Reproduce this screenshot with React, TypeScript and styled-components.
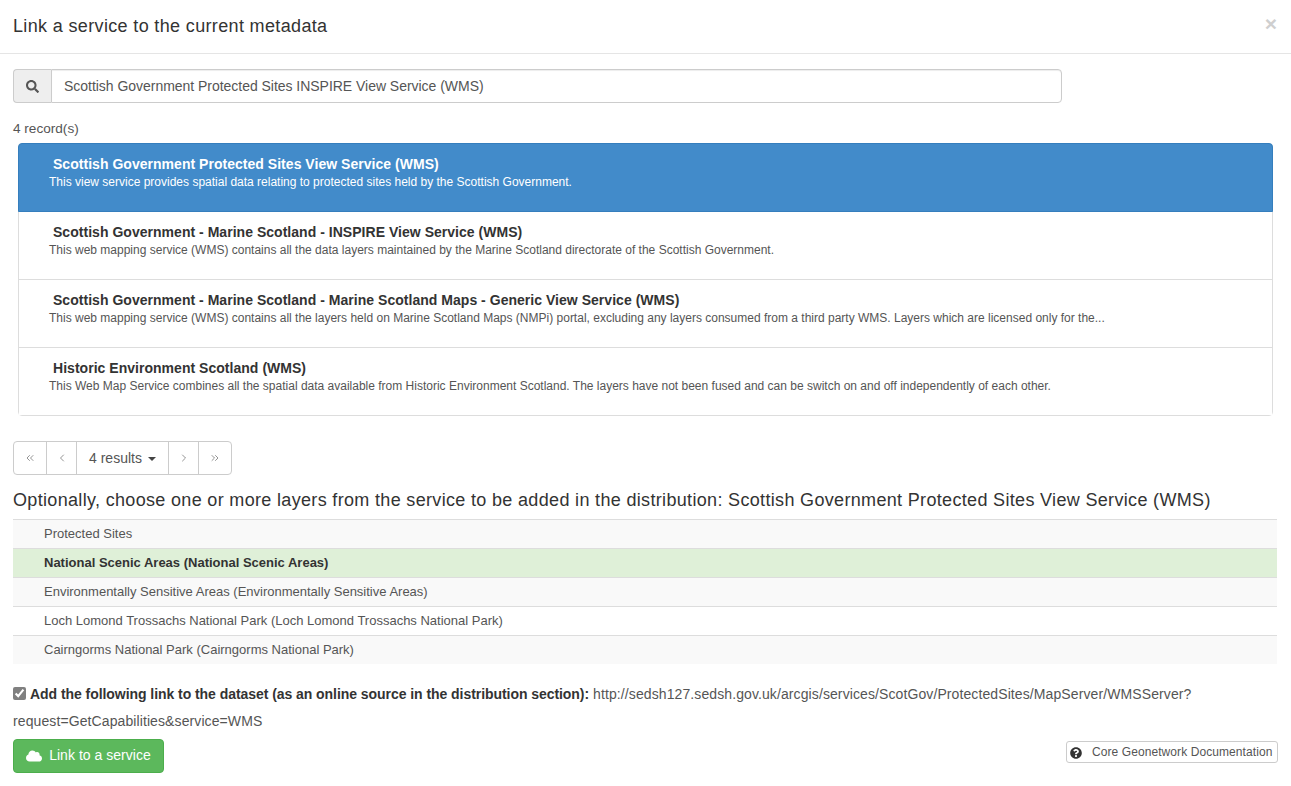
import React from 'react'
import styled, { createGlobalStyle } from 'styled-components'
import { FaSearch, FaCloud, FaQuestionCircle } from 'react-icons/fa'
import { ChevronLeft, ChevronRight, ChevronsLeft, ChevronsRight } from 'lucide-react'

const GlobalStyle = createGlobalStyle`
  html, body {
    margin: 0;
    padding: 0;
    background: #fff;
    color: #333;
    font-family: 'Liberation Sans', Arial, sans-serif;
    font-size: 13px;
    line-height: 1.42857;
  }
  * { box-sizing: border-box; }
`

const Modal = styled.div`
  width: 1291px;
  height: 786px;
  overflow: hidden;
  background: #fff;
`

const ModalHeader = styled.div`
  height: 54px;
  padding: 0 13px;
  display: flex;
  align-items: center;
  justify-content: space-between;
  border-bottom: 1px solid #e5e5e5;
`

const Title = styled.h4`
  margin: 0;
  font-size: 18px;
  font-weight: 400;
  color: #333;
  letter-spacing: 0.35px;
`

const Close = styled.span`
  color: #cfcfcf;
  font-size: 21px;
  font-weight: 700;
  line-height: 1;
  margin-right: 1px;
  margin-top: -7px;
`

const ModalBody = styled.div`
  padding: 15px 13px 0;
`

const SearchGroup = styled.div`
  display: flex;
  width: 1049px;
  height: 34px;
`

const SearchAddon = styled.span`
  width: 38px;
  display: flex;
  align-items: center;
  justify-content: center;
  background: #eee;
  border: 1px solid #ccc;
  border-right: 0;
  border-radius: 4px 0 0 4px;
  color: #555;
  font-size: 13px;
`

const SearchInput = styled.input`
  flex: 1;
  min-width: 0;
  padding: 2px 12px 0;
  border: 1px solid #ccc;
  border-radius: 0 4px 4px 0;
  color: #555;
  font: inherit;
  font-size: 14px;
  letter-spacing: -0.03px;
  box-shadow: inset 0 1px 1px rgba(0, 0, 0, 0.075);
  outline: none;
`

const RecordCount = styled.div`
  margin-top: 16px;
  height: 24px;
  line-height: 19px;
  font-size: 13.6px;
  color: #555;
`

const ResultList = styled.div`
  margin-left: 5px;
  width: 1255px;
  height: 273px;
  border: 1px solid #ddd;
  border-radius: 4px;
`

const ResultItem = styled.div<{ active?: boolean }>`
  height: ${props => (props.active ? '69px' : '68px')};
  margin: ${props => (props.active ? '-1px -1px 0' : '0')};
  padding: 11px 0 0 30px;
  background: ${props => (props.active ? '#428bca' : '#fff')};
  color: ${props => (props.active ? '#fff' : '#333')};
  border: ${props => (props.active ? '1px solid #357ebd' : '0')};
  border-bottom: 1px solid ${props => (props.active ? '#357ebd' : '#ddd')};
  border-radius: ${props => (props.active ? '4px 4px 0 0' : '0')};

  &:last-child {
    height: 67px;
    border-bottom: 0;
  }
`

const ResultTitle = styled.div`
  margin: 0 0 1px 4px;
  font-size: 14px;
  font-weight: 700;
  line-height: 18px;
  letter-spacing: 0.03px;
`

const ResultText = styled.div<{ active?: boolean }>`
  font-size: 12px;
  line-height: 17px;
  color: ${props => (props.active ? '#fff' : '#555')};
`

const Pager = styled.div`
  display: inline-flex;
  margin-top: 25px;
  height: 34px;
  border: 1px solid #ccc;
  border-radius: 4px;
`

const PagerCell = styled.span<{ size?: 'first' | 'last' | 'step' | 'wide' }>`
  width: ${props => (props.size === 'wide' ? '92px' : props.size === 'step' ? '30px' : props.size === 'last' ? '33px' : '32px')};
  padding-top: ${props => (props.size === 'wide' ? '1px' : '0')};
  display: flex;
  align-items: center;
  justify-content: center;
  gap: 6px;
  font-size: 14px;
  color: ${props => (props.size === 'wide' ? '#555' : '#666')};
  & + & { border-left: 1px solid #ccc; }
`

const Caret = styled.span`
  width: 0;
  height: 0;
  border-top: 4px solid #444;
  border-left: 4px solid transparent;
  border-right: 4px solid transparent;
`

const LayersHeading = styled.h3`
  margin: 15px 0 9px;
  font-size: 18px;
  font-weight: 400;
  line-height: 20px;
  color: #333;
  letter-spacing: 0.33px;
`

const LayerTable = styled.div`
  width: 1264px;
  border-top: 1px solid #ddd;
`

const LayerRow = styled.div<{ selected?: boolean; striped?: boolean }>`
  height: 29px;
  padding-left: 31px;
  display: flex;
  align-items: center;
  font-size: 13px;
  color: ${props => (props.selected ? '#333' : '#555')};
  font-weight: ${props => (props.selected ? 700 : 400)};
  background: ${props => (props.selected ? '#dff0d8' : props.striped ? '#f9f9f9' : '#fff')};
  &:first-child { height: 28px; }
  & + & { border-top: 1px solid #ddd; }
`

const LinkLine = styled.div`
  margin-top: 17px;
  width: 1264px;
  line-height: 27px;
  font-size: 14px;
  letter-spacing: 0.1px;
  color: #555;
`

const LinkCheck = styled.input`
  margin: 0 4px 0 0;
  width: 13px;
  height: 13px;
  vertical-align: -1px;
  accent-color: #808080;
`

const LinkLabel = styled.strong`
  color: #333;
  font-weight: 700;
  letter-spacing: -0.055px;
`

const Footer = styled.div`
  margin-top: 4px;
  width: 1265px;
  display: flex;
  justify-content: space-between;
  align-items: flex-start;
`

const LinkButton = styled.button`
  height: 34px;
  width: 151px;
  display: flex;
  align-items: center;
  justify-content: center;
  gap: 7px;
  padding: 0;
  background: #5cb85c;
  border: 1px solid #4cae4c;
  border-radius: 4px;
  color: #fff;
  font: inherit;
  font-size: 14px;
  letter-spacing: 0.03px;
  svg { font-size: 16px; }
`

const DocButton = styled.button`
  height: 22px;
  width: 212px;
  margin-top: 2px;
  display: flex;
  align-items: center;
  gap: 10px;
  padding: 1px 0 0 3px;
  background: #fff;
  border: 1px solid #ccc;
  border-radius: 3px;
  color: #555;
  font: inherit;
  font-size: 12px;
  letter-spacing: 0.08px;
  svg { color: #333; font-size: 12px; }
`

const services = [
  {
    title: 'Scottish Government Protected Sites View Service (WMS)',
    text: 'This view service provides spatial data relating to protected sites held by the Scottish Government.',
  },
  {
    title: 'Scottish Government - Marine Scotland - INSPIRE View Service (WMS)',
    text: 'This web mapping service (WMS) contains all the data layers maintained by the Marine Scotland directorate of the Scottish Government.',
  },
  {
    title: 'Scottish Government - Marine Scotland - Marine Scotland Maps - Generic View Service (WMS)',
    text: 'This web mapping service (WMS) contains all the layers held on Marine Scotland Maps (NMPi) portal, excluding any layers consumed from a third party WMS. Layers which are licensed only for the...',
  },
  {
    title: 'Historic Environment Scotland (WMS)',
    text: 'This Web Map Service combines all the spatial data available from Historic Environment Scotland. The layers have not been fused and can be switch on and off independently of each other.',
  },
]

const layers = [
  'Protected Sites',
  'National Scenic Areas (National Scenic Areas)',
  'Environmentally Sensitive Areas (Environmentally Sensitive Areas)',
  'Loch Lomond Trossachs National Park (Loch Lomond Trossachs National Park)',
  'Cairngorms National Park (Cairngorms National Park)',
]

export default function App() {
  return (
    <Modal>
      <GlobalStyle />
      <ModalHeader>
        <Title>Link a service to the current metadata</Title>
        <Close>×</Close>
      </ModalHeader>
      <ModalBody>
        <SearchGroup>
          <SearchAddon><FaSearch /></SearchAddon>
          <SearchInput readOnly value="Scottish Government Protected Sites INSPIRE View Service (WMS)" />
        </SearchGroup>
        <RecordCount>4 record(s)</RecordCount>
        <ResultList>
          {services.map((service, index) => (
            <ResultItem key={service.title} active={index === 0}>
              <ResultTitle>{service.title}</ResultTitle>
              <ResultText active={index === 0}>{service.text}</ResultText>
            </ResultItem>
          ))}
        </ResultList>
        <Pager>
          <PagerCell size="first"><ChevronsLeft size={12} strokeWidth={1.4} /></PagerCell>
          <PagerCell size="step"><ChevronLeft size={12} strokeWidth={1.4} /></PagerCell>
          <PagerCell size="wide">4 results <Caret /></PagerCell>
          <PagerCell size="step"><ChevronRight size={12} strokeWidth={1.4} /></PagerCell>
          <PagerCell size="last"><ChevronsRight size={12} strokeWidth={1.4} /></PagerCell>
        </Pager>
        <LayersHeading>
          Optionally, choose one or more layers from the service to be added in the distribution: Scottish Government Protected Sites View Service (WMS)
        </LayersHeading>
        <LayerTable>
          {layers.map((layer, index) => (
            <LayerRow key={layer} selected={index === 1} striped={index % 2 === 0}>{layer}</LayerRow>
          ))}
        </LayerTable>
        <LinkLine>
          <LinkCheck type="checkbox" checked readOnly />
          <LinkLabel>Add the following link to the dataset (as an online source in the distribution section):</LinkLabel>{' '}
          http://sedsh127.sedsh.gov.uk/arcgis/services/ScotGov/ProtectedSites/MapServer/WMSServer?request=GetCapabilities&amp;service=WMS
        </LinkLine>
        <Footer>
          <LinkButton><FaCloud /> Link to a service</LinkButton>
          <DocButton><FaQuestionCircle /> Core Geonetwork Documentation</DocButton>
        </Footer>
      </ModalBody>
    </Modal>
  )
}
